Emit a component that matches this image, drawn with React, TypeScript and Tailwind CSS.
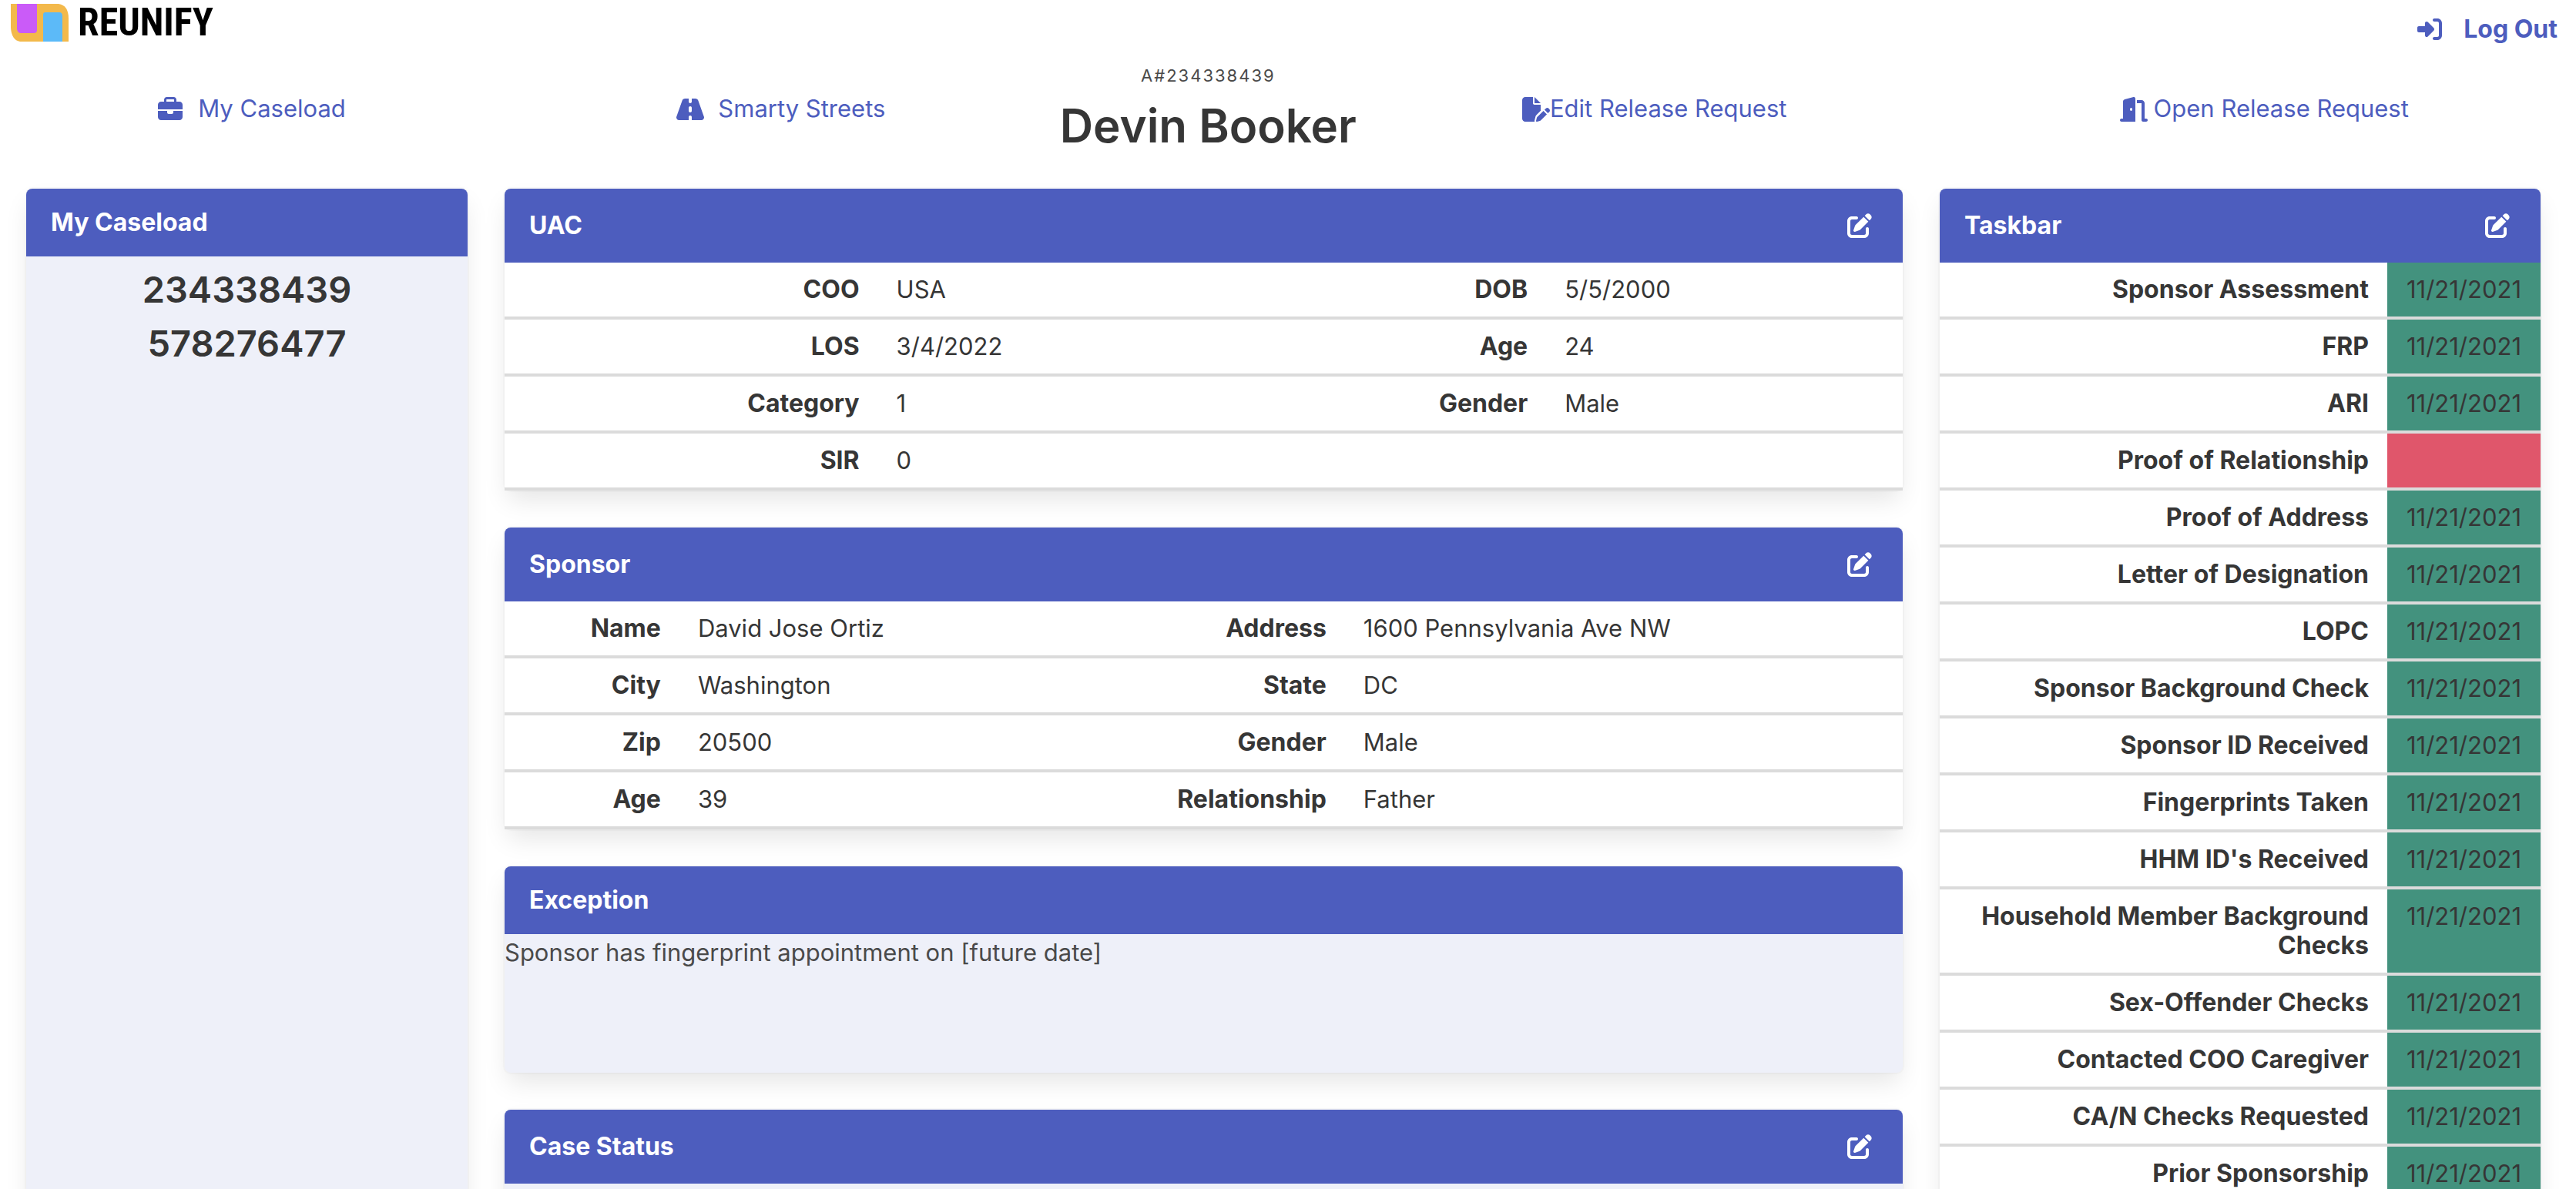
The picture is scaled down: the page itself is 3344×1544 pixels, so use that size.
import type { ReactNode } from "react";
import {
  FaBriefcase,
  FaDoorOpen,
  FaFilePen,
  FaPenToSquare,
  FaRightToBracket,
  FaRoad,
} from "react-icons/fa6";

function LogoMark() {
  return (
    <svg viewBox="0 0 75 49" className="h-[49px] w-[75px]" aria-hidden="true">
      <path d="M0 0H62Q75 2 75 19V49H12Q1 47 0 31Z" fill="#f3b94b" />
      <path d="M8 0H34V34Q34 38 30 38H13Q9 38 8 33Z" fill="#ca5bf8" />
      <path d="M42 14Q42 11 45 11H63Q67 11 67 16V49H42Z" fill="#5cbaf8" />
    </svg>
  );
}

function NavLink({ icon, gap, children }: { icon: ReactNode; gap: string; children: ReactNode }) {
  return (
    <a href="#" className={`flex items-center justify-center text-[#4d5dbe] ${gap}`}>
      {icon}
      <span>{children}</span>
    </a>
  );
}

function CardHeader({ title, editable = false }: { title: string; editable?: boolean }) {
  return (
    <header className="flex items-center justify-between rounded-t-lg bg-[#4d5dbe] py-5 pr-10 pl-8 text-white">
      <h2 className="text-[32px] leading-12 font-bold">{title}</h2>
      {editable && (
        <button type="button" aria-label={`Edit ${title}`} className="py-3">
          <FaPenToSquare className="size-8" />
        </button>
      )}
    </header>
  );
}

function Card({ className = "", children }: { className?: string; children: ReactNode }) {
  return (
    <section
      className={`rounded-lg shadow-[0_16px_32px_-4px_rgba(10,10,10,0.1),0_0_0_2px_rgba(10,10,10,0.02)] ${className}`}
    >
      {children}
    </section>
  );
}

type Pair = [string, string];

function DetailTable({ rows, columns }: { rows: Pair[][]; columns: string[] }) {
  return (
    <table className="w-full table-fixed border-collapse bg-white leading-[38px] text-[#363636]">
      <colgroup>
        {columns.map((width, i) => (
          <col key={i} className={width} />
        ))}
      </colgroup>
      <tbody>
        {rows.map((row) => (
          <tr key={row[0][0]} className="border-b-4 border-[#dbdbdb] align-top">
            {row.map(([label, value]) => [
              <th key={label} scope="row" className="px-6 py-4 text-right text-[32px] leading-[38px] font-bold">
                {label}
              </th>,
              <td key={`${label}-value`} className="px-6 py-4">
                {value}
              </td>,
            ])}
            {row.length === 1 && <td colSpan={2} />}
          </tr>
        ))}
      </tbody>
    </table>
  );
}

const uacRows: Pair[][] = [
  [["COO", "USA"], ["DOB", "5/5/2000"]],
  [["LOS", "3/4/2022"], ["Age", "24"]],
  [["Category", "1"], ["Gender", "Male"]],
  [["SIR", "0"]],
];

const sponsorRows: Pair[][] = [
  [["Name", "David Jose Ortiz"], ["Address", "1600 Pennsylvania Ave NW"]],
  [["City", "Washington"], ["State", "DC"]],
  [["Zip", "20500"], ["Gender", "Male"]],
  [["Age", "39"], ["Relationship", "Father"]],
];

const tasks: Pair[] = [
  ["Sponsor Assessment", "11/21/2021"],
  ["FRP", "11/21/2021"],
  ["ARI", "11/21/2021"],
  ["Proof of Relationship", ""],
  ["Proof of Address", "11/21/2021"],
  ["Letter of Designation", "11/21/2021"],
  ["LOPC", "11/21/2021"],
  ["Sponsor Background Check", "11/21/2021"],
  ["Sponsor ID Received", "11/21/2021"],
  ["Fingerprints Taken", "11/21/2021"],
  ["HHM ID's Received", "11/21/2021"],
  ["Household Member Background Checks", "11/21/2021"],
  ["Sex-Offender Checks", "11/21/2021"],
  ["Contacted COO Caregiver", "11/21/2021"],
  ["CA/N Checks Requested", "11/21/2021"],
  ["Prior Sponsorship", "11/21/2021"],
];

export default function App() {
  return (
    <div className="h-screen overflow-hidden bg-white font-['Inter','Liberation_Sans',sans-serif] text-[31px] text-[#4a4a4a]">
      <div className="flex h-[82px] items-start justify-between pr-6 pl-3.5">
        <a href="#" aria-label="Reunify home" className="flex items-center gap-3 pt-[5px] text-black">
          <LogoMark />
          <span className="font-['Roboto_Condensed','Liberation_Sans_Narrow','Liberation_Sans',sans-serif] text-[50px] leading-[49px] font-bold">
            REUNIFY
          </span>
        </a>
        <a
          href="#"
          className="flex items-center gap-7 pt-3.5 text-[32px] leading-12 font-bold text-[#4d5dbe]"
        >
          <FaRightToBracket className="size-8" />
          Log Out
        </a>
      </div>

      <nav className="grid grid-cols-[162fr_183fr_auto_194fr_203fr] items-center pb-11">
        <NavLink gap="gap-3" icon={<FaBriefcase className="h-8 w-12" />}>
          My Caseload
        </NavLink>
        <NavLink gap="gap-3" icon={<FaRoad className="h-8 w-12" />}>
          Smarty Streets
        </NavLink>
        <div className="text-center">
          <p className="mb-2.5 text-[22px] leading-[33px] tracking-[2px] uppercase">A#234338439</p>
          <h1 className="text-[60px] leading-[76px] font-semibold text-[#363636]">Devin Booker</h1>
        </div>
        <NavLink gap="gap-0" icon={<FaFilePen className="h-8 w-9" />}>
          Edit Release Request
        </NavLink>
        <NavLink gap="gap-2" icon={<FaDoorOpen className="h-8 w-9" />}>
          Open Release Request
        </NavLink>
      </nav>

      <main className="grid grid-cols-[3fr_9fr_4fr] pr-[22px] pl-[10px]">
        <div className="flex flex-col px-6">
          <Card className="flex-1 bg-[#eef0f9]">
            <CardHeader title="My Caseload" />
            <ul className="pt-2 text-center text-[47px] leading-[70px] font-semibold text-[#363636]">
              <li>234338439</li>
              <li>578276477</li>
            </ul>
          </Card>
        </div>

        <div className="flex flex-col gap-12 px-6">
          <Card>
            <CardHeader title="UAC" editable />
            <DetailTable rows={uacRows} columns={["w-[26.7%]", "w-[24%]", "w-[23.8%]", "w-[25.5%]"]} />
          </Card>
          <Card>
            <CardHeader title="Sponsor" editable />
            <DetailTable rows={sponsorRows} columns={["w-[12.5%]", "w-[32%]", "w-[15.6%]", "w-[39.9%]"]} />
          </Card>
          <Card className="bg-[#eef0f9]">
            <CardHeader title="Exception" />
            <p className="min-h-[180px] leading-12">Sponsor has fingerprint appointment on [future date]</p>
          </Card>
          <Card className="flex-1 bg-[#eef0f9]">
            <CardHeader title="Case Status" editable />
          </Card>
        </div>

        <div className="px-6">
          <Card>
            <CardHeader title="Taskbar" editable />
            <table className="w-full border-collapse bg-white leading-[38px] text-[#363636]">
              <tbody>
                {tasks.map(([name, date]) => (
                  <tr key={name} className="border-b-4 border-[#dbdbdb] align-top">
                    <th scope="row" className="px-6 py-4 text-right text-[32px] leading-[38px] font-bold">
                      {name}
                    </th>
                    <td
                      className={`w-[199px] px-4 py-4 text-center whitespace-nowrap ${date ? "bg-[#43927e]" : "bg-[#e0566b]"}`}
                    >
                      {date}
                    </td>
                  </tr>
                ))}
              </tbody>
            </table>
          </Card>
        </div>
      </main>
    </div>
  );
}
